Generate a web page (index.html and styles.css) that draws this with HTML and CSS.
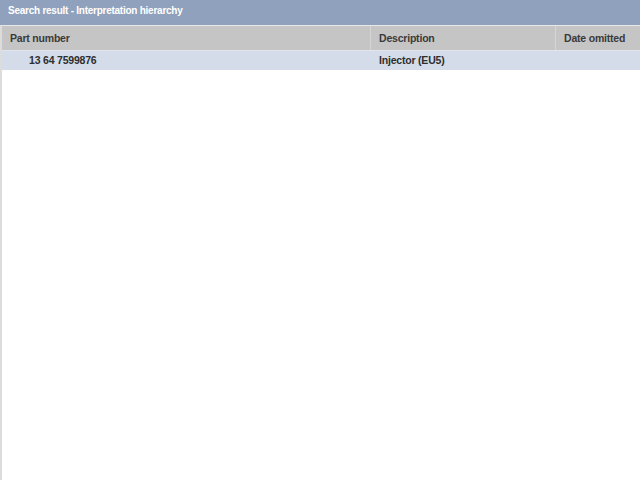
FILE: index.html
```html
<!DOCTYPE html>
<html>
<head>
<meta charset="utf-8">
<link rel="stylesheet" href="styles.css">
</head>
<body>
<div class="window">
  <div class="titlebar">Search result - Interpretation hierarchy</div>
  <div class="content">
    <div class="row header">
      <div class="cell c1">Part number</div>
      <div class="cell c2">Description</div>
      <div class="cell c3">Date omitted</div>
    </div>
    <div class="row data">
      <div class="cell c1 indent">13 64 7599876</div>
      <div class="cell c2">Injector (EU5)</div>
      <div class="cell c3"></div>
    </div>
  </div>
</div>
</body>
</html>
```

FILE: styles.css
```css
html, body {
  margin: 0;
  padding: 0;
  width: 640px;
  height: 480px;
  overflow: hidden;
  background: #ffffff;
  font-family: "Liberation Sans", Arial, sans-serif;
}
.window {
  display: flex;
  flex-direction: column;
  height: 480px;
}
.titlebar {
  height: 25px;
  background: #8fa1bc;
  color: #ffffff;
  font-size: 10px;
  letter-spacing: -0.25px;
  font-weight: bold;
  line-height: 22px;
  padding-left: 8px;
  box-sizing: border-box;
}
.content {
  flex: 1;
  border-left: 2px solid #dcdcdc;
  border-top: 1px solid #e8e8e8;
  background: #ffffff;
}
.row {
  display: grid;
  grid-template-columns: 368px 185px 1fr;
}
.header {
  height: 24px;
  background: #c5c5c5;
  border-bottom: 1px solid #e2e6ec;
  color: #3a3a3a;
}
.data {
  height: 19px;
  background: #d3dce8;
  color: #2e2e2e;
}
.cell {
  font-size: 10.5px;
  letter-spacing: -0.2px;
  font-weight: bold;
  padding-left: 8px;
  white-space: nowrap;
}
.header .cell {
  line-height: 24px;
}
.header .c2, .header .c3 {
  border-left: 1px solid #d6d6d6;
}
.data .c2, .data .c3 {
  border-left: 1px solid transparent;
}
.data .cell {
  line-height: 19px;
}
.indent {
  padding-left: 27px;
}
```
